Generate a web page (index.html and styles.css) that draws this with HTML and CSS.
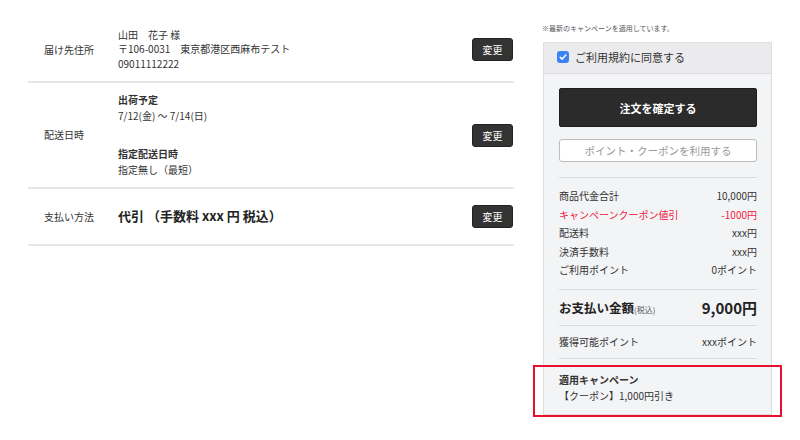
FILE: index.html
```html
<!DOCTYPE html>
<html lang="ja">
<head>
<meta charset="utf-8">
<link rel="stylesheet" href="styles.css">
</head>
<body>
<div class="page">
  <div class="main">
    <div class="row row-address">
      <div class="label">届け先住所</div>
      <div class="content">
        <div>山田　花子 様</div>
        <div>〒106-0031　東京都港区西麻布テスト</div>
        <div>09011112222</div>
      </div>
      <button class="change">変更</button>
    </div>
    <div class="row row-delivery">
      <div class="label">配送日時</div>
      <div class="content tall">
        <div class="strong">出荷予定</div>
        <div>7/12(金) 〜 7/14(日)</div>
        <div class="spacer"></div>
        <div class="strong">指定配送日時</div>
        <div>指定無し（最短）</div>
      </div>
      <button class="change">変更</button>
    </div>
    <div class="row row-pay">
      <div class="label">支払い方法</div>
      <div class="content pay">代引 （手数料 xxx 円 税込）</div>
      <button class="change">変更</button>
    </div>
  </div>
  <div class="side">
    <div class="note">※最新のキャンペーンを適用しています。</div>
    <div class="panel">
      <div class="agree">
        <span class="check"><svg viewBox="0 0 12 12" width="12" height="12"><path d="M3.2 6.2 L5.2 8.1 L8.8 4" fill="none" stroke="#fff" stroke-width="1.5" stroke-linecap="round" stroke-linejoin="round"/></svg></span>
        <span>ご利用規約に同意する</span>
      </div>
      <div class="body">
        <button class="confirm">注文を確定する</button>
        <button class="coupon">ポイント・クーポンを利用する</button>
        <div class="lines">
          <div class="line"><span>商品代金合計</span><span>10,000円</span></div>
          <div class="line red"><span>キャンペーンクーポン値引</span><span>-1000円</span></div>
          <div class="line"><span>配送料</span><span>xxx円</span></div>
          <div class="line"><span>決済手数料</span><span>xxx円</span></div>
          <div class="line"><span>ご利用ポイント</span><span>0ポイント</span></div>
        </div>
        <div class="total"><span class="total-label">お支払い金額<small>(税込)</small></span><span class="total-val">9,000円</span></div>
        <div class="earn"><span>獲得可能ポイント</span><span>xxxポイント</span></div>
        <div class="campaign">
          <div class="strong">適用キャンペーン</div>
          <div>【クーポン】1,000円引き</div>
          <div class="highlight"></div>
        </div>
      </div>
    </div>
  </div>
</div>
</body>
</html>
```

FILE: styles.css
```css
* { box-sizing: border-box; }
html, body { margin: 0; padding: 0; background: #fff; }
body {
  font-family: "Noto Sans CJK JP", "Noto Sans", sans-serif;
  color: #333;
  font-size: 10px;
  width: 800px;
  height: 440px;
  overflow: hidden;
}
.page {
  display: flex;
  align-items: flex-start;
  padding-left: 28px;
}
.main {
  width: 486px;
  margin-top: 20px;
}
.row {
  display: flex;
  align-items: center;
  border-bottom: 2px solid #e6e6e6;
  padding-left: 16px;
  padding-right: 1px;
}
.label {
  width: 74px;
  flex: none;
  line-height: 14px;
}
.content {
  flex: 1;
  line-height: 14.5px;
}
.content.tall { line-height: 16px; }
.strong { font-weight: bold; }
.spacer { height: 22px; }
.row-address { height: 63px; padding-bottom: 2px; }
.row-delivery { height: 106px; }
.row-pay { height: 57px; }
.pay { font-size: 13px; font-weight: bold; color: #222; }
.change {
  flex: none;
  width: 41px;
  height: 23px;
  background: #333;
  color: #fff;
  border: 1px solid #222;
  border-radius: 3px;
  font-family: inherit;
  font-size: 10px;
  padding: 0;
}
.side {
  margin-left: 29px;
  width: 229px;
}
.note {
  font-size: 7px;
  color: #555;
  margin-top: 23px;
  height: 19px;
  line-height: 10px;
  margin-left: -1px;
}
.panel {
  border: 1px solid #dedede;
  background: #f3f4f6;
}
.agree {
  display: flex;
  align-items: center;
  height: 31px;
  background: #ebebed;
  border-bottom: 1px solid #dcdcdc;
  padding-left: 13px;
  padding-bottom: 2px;
  font-size: 11px;
  color: #333;
}
.check {
  width: 12px;
  height: 12px;
  border-radius: 3px;
  background: #3b82f6;
  margin-right: 6px;
  display: flex;
}
.body {
  padding: 14px 14px 0 15px;
}
.confirm {
  display: block;
  width: 100%;
  height: 39px;
  background: #2b2b2b;
  color: #fff;
  border: 1px solid #1e1e1e;
  border-radius: 2px;
  font-family: inherit;
  font-size: 11px;
  font-weight: bold;
  padding: 0;
}
.coupon {
  display: block;
  width: 100%;
  height: 23px;
  margin-top: 12px;
  background: #fff;
  color: #999;
  border: 1px solid #bdbdbd;
  border-radius: 3px;
  font-family: inherit;
  font-size: 10.5px;
  padding: 0;
}
.lines {
  margin-top: 15px;
  border-top: 1px solid #dcdcdc;
  padding: 9px 0 9px;
  border-bottom: 1px solid #dcdcdc;
}
.line {
  display: flex;
  justify-content: space-between;
  height: 18.6px;
  line-height: 18px;
}
.red { color: #f0193f; }
.total {
  display: flex;
  justify-content: space-between;
  align-items: center;
  height: 36px;
  border-bottom: 1px solid #dcdcdc;
}
.total-label { font-size: 12.5px; font-weight: bold; color: #222; }
.total-label small { font-size: 8px; font-weight: normal; color: #555; }
.total-val { font-size: 15px; font-weight: bold; color: #222; }
.earn {
  display: flex;
  justify-content: space-between;
  align-items: center;
  height: 33px;
  border-bottom: 1px solid #dcdcdc;
}
.campaign {
  position: relative;
  padding: 13px 0 10px;
  line-height: 16px;
}
.highlight {
  position: absolute;
  left: -26px;
  right: -25px;
  top: 6px;
  bottom: -3px;
  border: 2px solid #e8102e;
}
```
